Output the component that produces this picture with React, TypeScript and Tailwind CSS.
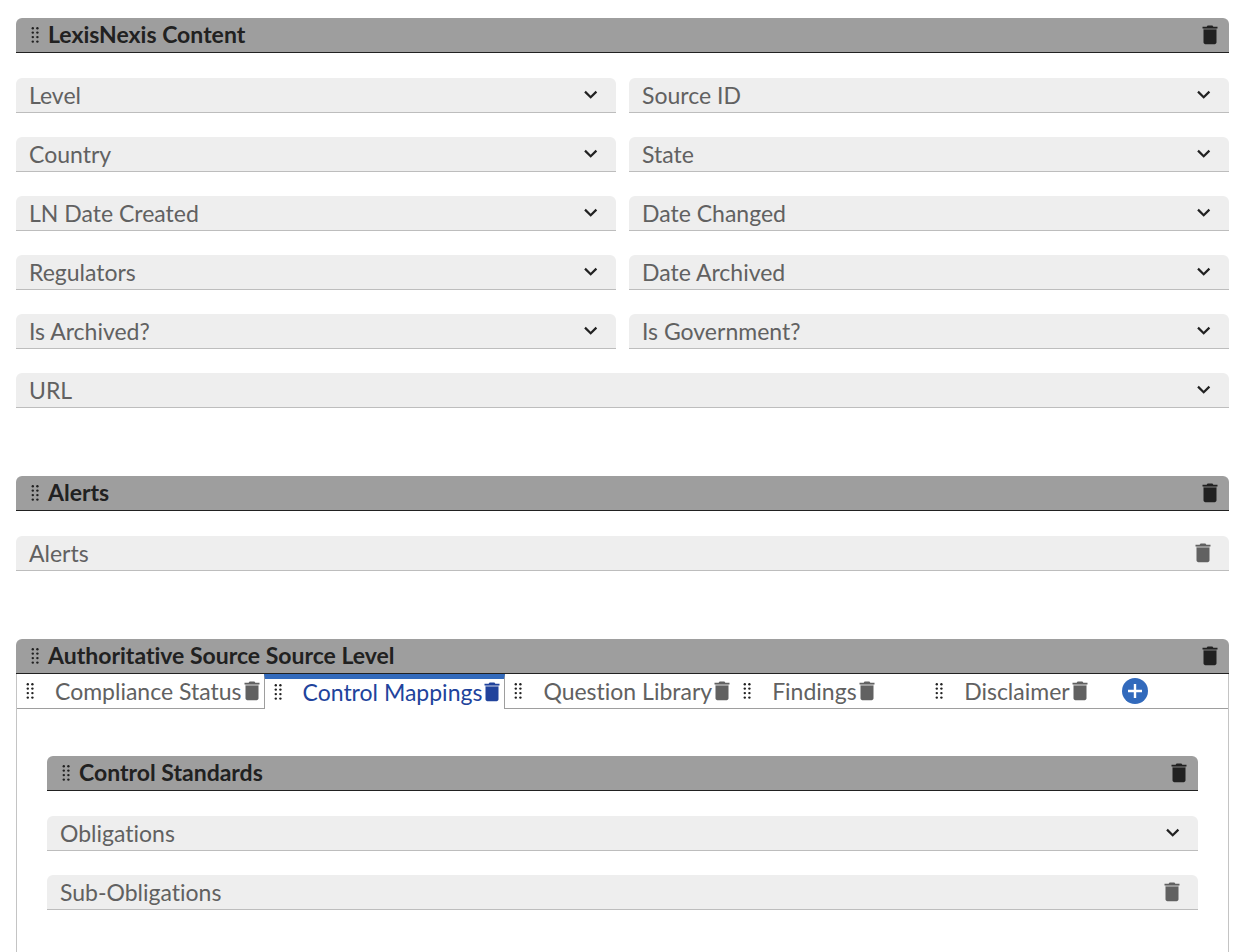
import { useState } from 'react'

const contentFields = [
  'Level',
  'Source ID',
  'Country',
  'State',
  'LN Date Created',
  'Date Changed',
  'Regulators',
  'Date Archived',
  'Is Archived?',
  'Is Government?',
]

const tabs = ['Compliance Status', 'Control Mappings', 'Question Library', 'Findings', 'Disclaimer']

function TrashIcon() {
  return (
    <svg className="h-5 w-4" viewBox="0 0 16 20" fill="currentColor" aria-hidden="true">
      <path d="M4.6 1.7 5.6.4h4.8l1 1.3h4.1v1.8H.5V1.7z" />
      <path d="M1.4 3.5h13.2v1H1.4z" opacity="0.45" />
      <path d="M1.5 4.4h13v12.9c0 1.1-.8 1.9-1.9 1.9H3.4c-1.1 0-1.9-.8-1.9-1.9z" />
    </svg>
  )
}

function GripIcon() {
  return (
    <svg className="h-4 w-2 shrink-0 text-[#212121]" viewBox="0 0 8 16" fill="currentColor" aria-hidden="true">
      {[1.2, 5.6, 10.1, 14.6].map((y) => (
        <g key={y}>
          <circle cx="1.8" cy={y} r="1.2" />
          <circle cx="6.4" cy={y} r="1.2" />
        </g>
      ))}
    </svg>
  )
}

function ChevronIcon() {
  return (
    <svg
      className="pointer-events-none absolute top-3 right-[18px] h-2.5 w-3.5 text-[#212121]"
      viewBox="0 0 14 10"
      fill="none"
      stroke="currentColor"
      strokeWidth="2.2"
      aria-hidden="true"
    >
      <path d="m1 1.6 5.7 5.7 5.7-5.7" />
    </svg>
  )
}

function SectionHeader({ title }: { title: string }) {
  return (
    <header className="flex h-[35px] items-center rounded-t-md border-b border-[#212121] bg-[#9e9e9e] pr-[11px] pl-[15px] text-[#212121]">
      <GripIcon />
      <h2 className="ml-[9px] flex-1 pb-0.5 font-bold">{title}</h2>
      <button type="button" aria-label={`Delete ${title}`}>
        <TrashIcon />
      </button>
    </header>
  )
}

function SelectField({ label, wide }: { label: string; wide?: boolean }) {
  return (
    <div className={wide ? 'relative col-span-2' : 'relative'}>
      <select
        aria-label={label}
        className="block h-[35px] w-full appearance-none rounded-none rounded-t-md border-b border-[#bdbdbd] bg-[#eeeeee] pr-10 pl-[13px] text-[#616161]"
      >
        <option>{label}</option>
      </select>
      <ChevronIcon />
    </div>
  )
}

function ItemField({ label }: { label: string }) {
  return (
    <div className="flex h-[35px] items-center justify-between rounded-t-md border-b border-[#bdbdbd] bg-[#eeeeee] pr-[18px] pl-[13px] text-[#616161]">
      <span>{label}</span>
      <button type="button" aria-label={`Delete ${label}`}>
        <TrashIcon />
      </button>
    </div>
  )
}

function App() {
  const [active, setActive] = useState('Control Mappings')

  return (
    <main className="flex min-h-screen flex-col bg-white pt-[18px] pr-[25px] pl-4 font-['Lato',sans-serif] text-[23px] leading-7 [font-variant-ligatures:none]">
      <section className="mb-[68px]">
        <SectionHeader title="LexisNexis Content" />
        <div className="mt-[25px] grid grid-cols-2 gap-x-[13px] gap-y-6">
          {contentFields.map((label) => (
            <SelectField key={label} label={label} />
          ))}
          <SelectField label="URL" wide />
        </div>
      </section>

      <section className="mb-[68px]">
        <SectionHeader title="Alerts" />
        <div className="mt-[25px]">
          <ItemField label="Alerts" />
        </div>
      </section>

      <section className="flex flex-1 flex-col">
        <SectionHeader title="Authoritative Source Source Level" />
        <div className="flex flex-1 flex-col border-x border-[#c4c4c4]">
          <div className="flex h-[35px]">
            {tabs.map((tab) => (
              <div
                key={tab}
                className={
                  tab === active
                    ? 'flex min-w-48 items-center border-x border-t-[5px] border-x-[#9e9e9e] border-t-[#326abc] pr-1 pb-1 pl-[9px] text-[#21439c]'
                    : 'flex min-w-48 items-center border-b border-[#9e9e9e] pr-1 pl-[9px] text-[#616161]'
                }
              >
                <GripIcon />
                <button type="button" className="ml-[21px] whitespace-nowrap" onClick={() => setActive(tab)}>
                  {tab}
                </button>
                <button type="button" aria-label={`Delete ${tab}`} className="ml-0.5">
                  <TrashIcon />
                </button>
              </div>
            ))}
            <div className="flex flex-1 items-center border-b border-[#9e9e9e] pl-1">
              <button
                type="button"
                aria-label="Add tab"
                className="flex size-[26px] items-center justify-center rounded-full bg-[#326abc] text-white"
              >
                <svg className="size-3.5" viewBox="0 0 14 14" stroke="currentColor" strokeWidth="2.4" aria-hidden="true">
                  <path d="M7 0v14M0 7h14" />
                </svg>
              </button>
            </div>
          </div>

          <div className="mt-[47px] px-[30px]">
            <SectionHeader title="Control Standards" />
            <div className="mt-[25px] flex flex-col gap-6">
              <SelectField label="Obligations" />
              <ItemField label="Sub-Obligations" />
            </div>
          </div>
        </div>
      </section>
    </main>
  )
}

export default App
